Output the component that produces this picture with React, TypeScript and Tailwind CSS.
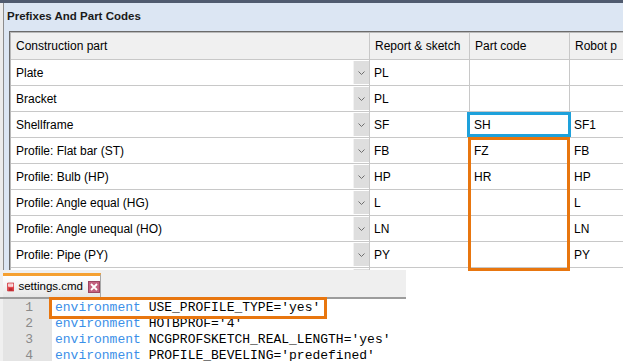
import React from "react";

const rows: [string, string, string, string][] = [
  ["Plate", "PL", "", ""],
  ["Bracket", "PL", "", ""],
  ["Shellframe", "SF", "SH", "SF1"],
  ["Profile: Flat bar (ST)", "FB", "FZ", "FB"],
  ["Profile: Bulb (HP)", "HP", "HR", "HP"],
  ["Profile: Angle equal (HG)", "L", "", "L"],
  ["Profile: Angle unequal (HO)", "LN", "", "LN"],
  ["Profile: Pipe (PY)", "PY", "", "PY"],
  ["", "", "", ""],
];

const code = [
  "USE_PROFILE_TYPE='yes'",
  "HOTBPROF='4'",
  "NCGPROFSKETCH_REAL_LENGTH='yes'",
  "PROFILE_BEVELING='predefined'",
];

function Chevron() {
  return (
    <svg width="7" height="4" viewBox="0 0 7 4">
      <path d="M0.5 0.5 L3.5 3.5 L6.5 0.5" fill="none" stroke="#6e6e6e" strokeWidth="1" />
    </svg>
  );
}

function FloppyIcon() {
  return (
    <svg width="12" height="14" viewBox="0 0 12 14">
      <rect x="0.5" y="0.5" width="11" height="13" rx="1" fill="#e5484d" stroke="#c22a30" />
      <rect x="2" y="1.5" width="8" height="5" fill="#ffffff" />
      <line x1="3" y1="3" x2="9" y2="3" stroke="#f2a0a3" />
      <line x1="3" y1="5" x2="9" y2="5" stroke="#f2a0a3" />
      <rect x="3" y="9" width="6" height="4" fill="#b8282d" />
    </svg>
  );
}

function CloseIcon() {
  return (
    <div className="w-[12px] h-[12px] bg-[#c4607f] border border-[#9c4461] flex items-center justify-center">
      <svg width="8" height="8" viewBox="0 0 8 8">
        <path d="M1 1 L7 7 M7 1 L1 7" stroke="#ffffff" strokeWidth="1.8" />
      </svg>
    </div>
  );
}

export default function App() {
  return (
    <div className="relative w-[623px] h-[361px] overflow-hidden bg-white font-['Liberation_Sans',sans-serif] text-[12px] text-black">
      {/* Prefixes panel */}
      <div className="h-[270px] flex flex-col overflow-hidden">
        <div className="h-[3px] shrink-0 bg-[#505b6f]" />
        <div className="flex flex-1 min-h-0">
          <div className="w-[3px] bg-[#ececec]" />
          <div className="w-px bg-[#8c8c8c]" />
          <div className="flex-1 flex flex-col bg-[#dce6f3] min-w-0">
            <div className="h-[28px] shrink-0 flex items-center pl-[3px] font-bold text-[11.5px] text-[#1a1a1a] whitespace-nowrap">
              Prefixes And Part Codes
            </div>
            <div className="flex-1 ml-[5px] border-l border-t border-[#6b6b6b] bg-white overflow-hidden">
              <div className="h-full border-l border-t border-[#b9b9b9]">
                <div className="flex h-[27px] bg-[#f0f0f0] border-b border-[#c8c8c8] whitespace-nowrap">
                  <div className="w-[359px] shrink-0 border-r border-[#c8c8c8] pl-[5px] flex items-center">
                    Construction part
                  </div>
                  <div className="w-[100px] shrink-0 border-r border-[#c8c8c8] pl-[5px] flex items-center">
                    Report &amp; sketch
                  </div>
                  <div className="w-[100px] shrink-0 border-r border-[#c8c8c8] pl-[5px] flex items-center">
                    Part code
                  </div>
                  <div className="flex-1 pl-[5px] flex items-center">Robot p</div>
                </div>
                {rows.map(([name, report, part, robot], i) => (
                  <div key={i} className="flex h-[26px] border-b border-[#c8c8c8] whitespace-nowrap">
                    <div className="w-[342px] shrink-0 pl-[5px] flex items-center">{name}</div>
                    <div className="w-[17px] shrink-0 border-r border-[#c8c8c8] py-px">
                      <div className="h-full bg-[#dedede] border-l border-[#f2f2f2] flex items-center justify-center">
                        <Chevron />
                      </div>
                    </div>
                    <div className="w-[100px] shrink-0 border-r border-[#c8c8c8] pl-[4px] flex items-center">
                      {report}
                    </div>
                    <div className="w-[100px] shrink-0 border-r border-[#c8c8c8] pl-[4px] flex items-center">
                      {part}
                    </div>
                    <div className="flex-1 pl-[4px] flex items-center">{robot}</div>
                  </div>
                ))}
              </div>
            </div>
          </div>
        </div>
      </div>

      {/* Editor */}
      <div className="h-[91px] flex overflow-hidden">
        <div className="w-[406px] flex flex-col overflow-hidden">
          <div className="h-[29px] shrink-0 flex bg-[#efefef] border-b-2 border-[#9c9c9c]">
            <div className="w-[3px]" />
            <div className="mt-[3px] w-[98px] border-t-[3px] border-[#f5a030] border-r border-r-[#a8a8a8] bg-gradient-to-b from-white to-[#e6e6e6] flex items-center pl-[4px] gap-[4px]">
              <FloppyIcon />
              <span className="text-[11.5px] text-black">settings.cmd</span>
              <div className="ml-[1px]">
                <CloseIcon />
              </div>
            </div>
          </div>
          <div className="flex-1 min-h-0 flex font-['Liberation_Mono',monospace] text-[13px] leading-[16px]">
            <div className="w-[3px] bg-[#f0f0f0]" />
            <div className="w-[49px] bg-[#e4e4e4] text-right pr-[19px] pt-px text-[#8a8a8a]">
              {code.map((_, i) => (
                <div key={i}>{i + 1}</div>
              ))}
            </div>
            <div className="flex-1 pl-[3px] pt-px whitespace-nowrap">
              {code.map((line, i) => (
                <div key={i}>
                  <span className="text-[#3a8fe8]">environment</span> {line}
                </div>
              ))}
            </div>
          </div>
        </div>
        <div className="flex-1" />
      </div>

      {/* Annotations */}
      <div className="absolute left-[467px] top-[112px] w-[104px] h-[25px] border-[3px] border-[#1ea1db]" />
      <div className="absolute left-[468px] top-[137px] w-[102px] h-[134px] border-[3px] border-[#e8760f]" />
      <div className="absolute left-[49px] top-[297px] w-[278px] h-[22px] border-[3px] border-[#e8760f]" />
    </div>
  );
}
